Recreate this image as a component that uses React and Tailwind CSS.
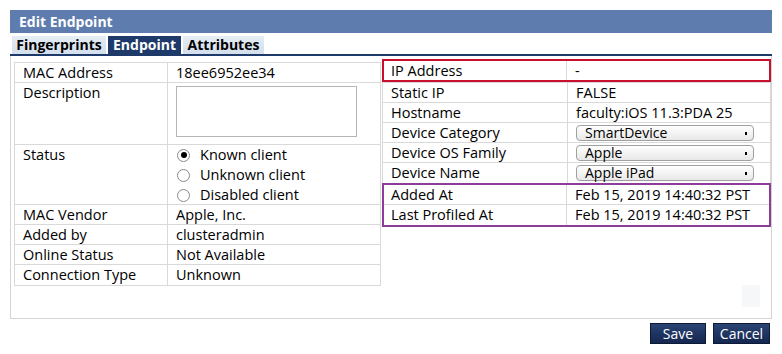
import React from "react";

const font = { fontFamily: '"Open Sans", "Noto Sans", sans-serif' };

function Row({ label, children, h = "h-[20px]", last = false }) {
  return (
    <div className={`flex ${h} ${last ? "" : "border-b border-[#d9d9d9]"}`}>
      <div className="w-[153px] shrink-0 border-r border-[#d9d9d9] pl-[8px] leading-[20px]">{label}</div>
      <div className="flex-1 pl-[8px] leading-[20px]">{children}</div>
    </div>
  );
}

function RRow({ label, children, last = false }) {
  return (
    <div className={`flex h-[20px] ${last ? "" : "border-b border-[#d9d9d9]"}`}>
      <div className="w-[185px] shrink-0 border-r border-[#d9d9d9] pl-[8px] leading-[20px]">{label}</div>
      <div className="flex-1 pl-[8px] leading-[20px]">{children}</div>
    </div>
  );
}

function Radio({ checked, label }) {
  return (
    <div className="flex items-center h-[20px]">
      <span className="w-[13px] h-[13px] rounded-full border border-[#8a8a8a] bg-white flex items-center justify-center ml-[1px]">
        {checked && <span className="w-[6px] h-[6px] rounded-full bg-black" />}
      </span>
      <span className="ml-[10px]">{label}</span>
    </div>
  );
}

function Select({ value }) {
  return (
    <div className="mt-[2px] w-[178px] h-[16px] rounded-[4px] border border-[#a0a0a0] bg-gradient-to-b from-white to-[#e8e8e8] flex items-center justify-between pl-[8px] pr-[6px] text-[14px] leading-[14px]">
      <span>{value}</span>
      <span className="w-[2px] h-[3px] bg-black" />
    </div>
  );
}

export default function App() {
  return (
    <div className="w-[782px] h-[354px] bg-white text-[14.5px] text-black" style={font}>
      <div className="pt-[10px] pl-[10px] w-[772px]">
        <div className="h-[23px] bg-[#5f7caf] text-white font-bold text-[14px] leading-[23px] pl-[9px]">Edit Endpoint</div>
        <div className="mt-[3px] flex items-end gap-[2px] pl-[2px] h-[18px] border-b-[2px] border-[#1d3a6b] box-content">
          <div className="h-[18px] w-[94px] text-center bg-gradient-to-b from-[#e6edf5] to-[#d3dfec] font-bold text-[14px] leading-[18px]">Fingerprints</div>
          <div className="h-[18px] w-[73px] text-center bg-[#1d3a6b] text-white font-bold text-[14px] leading-[18px]">Endpoint</div>
          <div className="h-[18px] w-[81px] text-center bg-gradient-to-b from-[#e6edf5] to-[#d3dfec] font-bold text-[14px] leading-[18px]">Attributes</div>
        </div>
        <div className="h-[263px] border border-t-0 border-[#d4d4d4] flex pl-[3px] relative">
          <div className="w-[367px] mt-[6px] self-start border border-[#d9d9d9]">
            <Row label="MAC Address">18ee6952ee34</Row>
            <Row label="Description" h="h-[62px]">
              <div className="mt-[3px] w-[181px] h-[51px] border border-[#b5b5b5]" />
            </Row>
            <div className="flex h-[60px] border-b border-[#d9d9d9]">
              <div className="w-[153px] shrink-0 border-r border-[#d9d9d9] pl-[8px] leading-[20px]">Status</div>
              <div className="flex-1 pl-[8px]">
                <Radio checked label="Known client" />
                <Radio label="Unknown client" />
                <Radio label="Disabled client" />
              </div>
            </div>
            <Row label="MAC Vendor">Apple, Inc.</Row>
            <Row label="Added by">clusteradmin</Row>
            <Row label="Online Status">Not Available</Row>
            <Row label="Connection Type" last>Unknown</Row>
          </div>
          <div className="ml-[1px] w-[389px] mt-[3px] self-start">
            <div className="border-[2px] border-[#c8102e]">
              <div className="flex h-[19px]">
                <div className="w-[183px] shrink-0 border-r border-[#d9d9d9] pl-[7px] leading-[19px]">IP Address</div>
                <div className="flex-1 pl-[8px] leading-[19px]">-</div>
              </div>
            </div>
            <div className="border-l border-r border-[#d9d9d9]">
              <div className="border-b border-[#d9d9d9]" />
              <RRow label="Static IP">FALSE</RRow>
              <RRow label="Hostname">faculty:iOS 11.3:PDA 25</RRow>
              <RRow label="Device Category"><Select value="SmartDevice" /></RRow>
              <RRow label="Device OS Family"><Select value="Apple" /></RRow>
              <RRow label="Device Name" last><Select value="Apple iPad" /></RRow>
            </div>
            <div className="border-[2px] border-[#8b3d97]">
              <div className="flex h-[20px] border-b border-[#d9d9d9]">
                <div className="w-[183px] shrink-0 border-r border-[#d9d9d9] pl-[7px] leading-[20px]">Added At</div>
                <div className="flex-1 pl-[8px] leading-[20px]">Feb 15, 2019 14:40:32 PST</div>
              </div>
              <div className="flex h-[20px]">
                <div className="w-[183px] shrink-0 border-r border-[#d9d9d9] pl-[7px] leading-[20px]">Last Profiled At</div>
                <div className="flex-1 pl-[8px] leading-[20px]">Feb 15, 2019 14:40:32 PST</div>
              </div>
            </div>
          </div>
          <div className="absolute right-[11px] bottom-[11px] w-[18px] h-[22px] bg-[#f6f7f9]" />
        </div>
        <div className="flex justify-end gap-[7px] mt-[4px] pr-[2px]">
          <button className="w-[56px] h-[21px] bg-gradient-to-b from-[#2a4474] to-[#142750] border border-[#0c1a38] text-white text-[14px] leading-[19px]">Save</button>
          <button className="w-[57px] h-[21px] bg-gradient-to-b from-[#2a4474] to-[#142750] border border-[#0c1a38] text-white text-[14px] leading-[19px]">Cancel</button>
        </div>
      </div>
    </div>
  );
}
